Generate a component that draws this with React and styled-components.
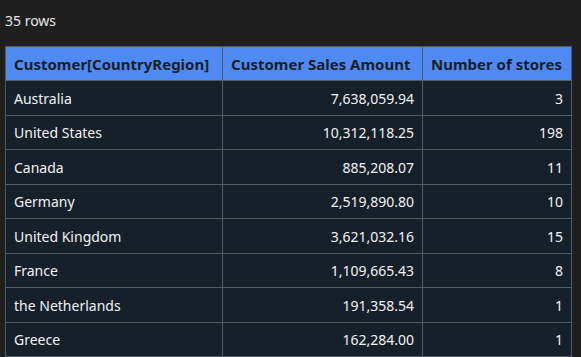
import React from 'react'
import styled, { createGlobalStyle } from 'styled-components'

const Global = createGlobalStyle`
  html, body {
    margin: 0;
    background: #1f1f1f;
    font-family: "Noto Sans", "Open Sans", sans-serif;
  }
`;

const Page = styled.div`
  padding: 0 0 0 5px;
  color: #e8e8e8;
`;

const Count = styled.div`
  height: 46px;
  display: flex;
  align-items: center;
  font-size: 14px;
  padding-bottom: 6px;
  box-sizing: border-box;
`;

const Table = styled.table`
  border-collapse: collapse;
  table-layout: fixed;
  width: 566px;
  font-size: 14px;
`;

const Head = styled.th`
  background: #4e8af2;
  color: #1c1f26;
  font-size: 15px;
  font-weight: 700;
  text-align: ${p => (p.$right ? 'right' : 'left')};
  height: 34px;
  padding: 0 8px;
  border: 1px solid #555a60;
  box-sizing: border-box;
  white-space: nowrap;
`;

const Cell = styled.td`
  background: #16202b;
  color: #f2f2f2;
  text-align: ${p => (p.$right ? 'right' : 'left')};
  height: 34.5px;
  padding: 1px 8px 0;
  border: 1px solid #555a60;
  box-sizing: border-box;
  white-space: nowrap;
`;

const rows = [
  ['Australia', '7,638,059.94', '3'],
  ['United States', '10,312,118.25', '198'],
  ['Canada', '885,208.07', '11'],
  ['Germany', '2,519,890.80', '10'],
  ['United Kingdom', '3,621,032.16', '15'],
  ['France', '1,109,665.43', '8'],
  ['the Netherlands', '191,358.54', '1'],
  ['Greece', '162,284.00', '1'],
];

export default function App() {
  return (
    <Page>
      <Global />
      <Count>35 rows</Count>
      <Table>
        <colgroup>
          <col style={{ width: 217 }} />
          <col style={{ width: 200 }} />
          <col style={{ width: 149 }} />
        </colgroup>
        <thead>
          <tr>
            <Head>Customer[CountryRegion]</Head>
            <Head>Customer Sales Amount</Head>
            <Head>Number of stores</Head>
          </tr>
        </thead>
        <tbody>
          {rows.map(r => (
            <tr key={r[0]}>
              <Cell>{r[0]}</Cell>
              <Cell $right>{r[1]}</Cell>
              <Cell $right>{r[2]}</Cell>
            </tr>
          ))}
        </tbody>
      </Table>
    </Page>
  )
}
